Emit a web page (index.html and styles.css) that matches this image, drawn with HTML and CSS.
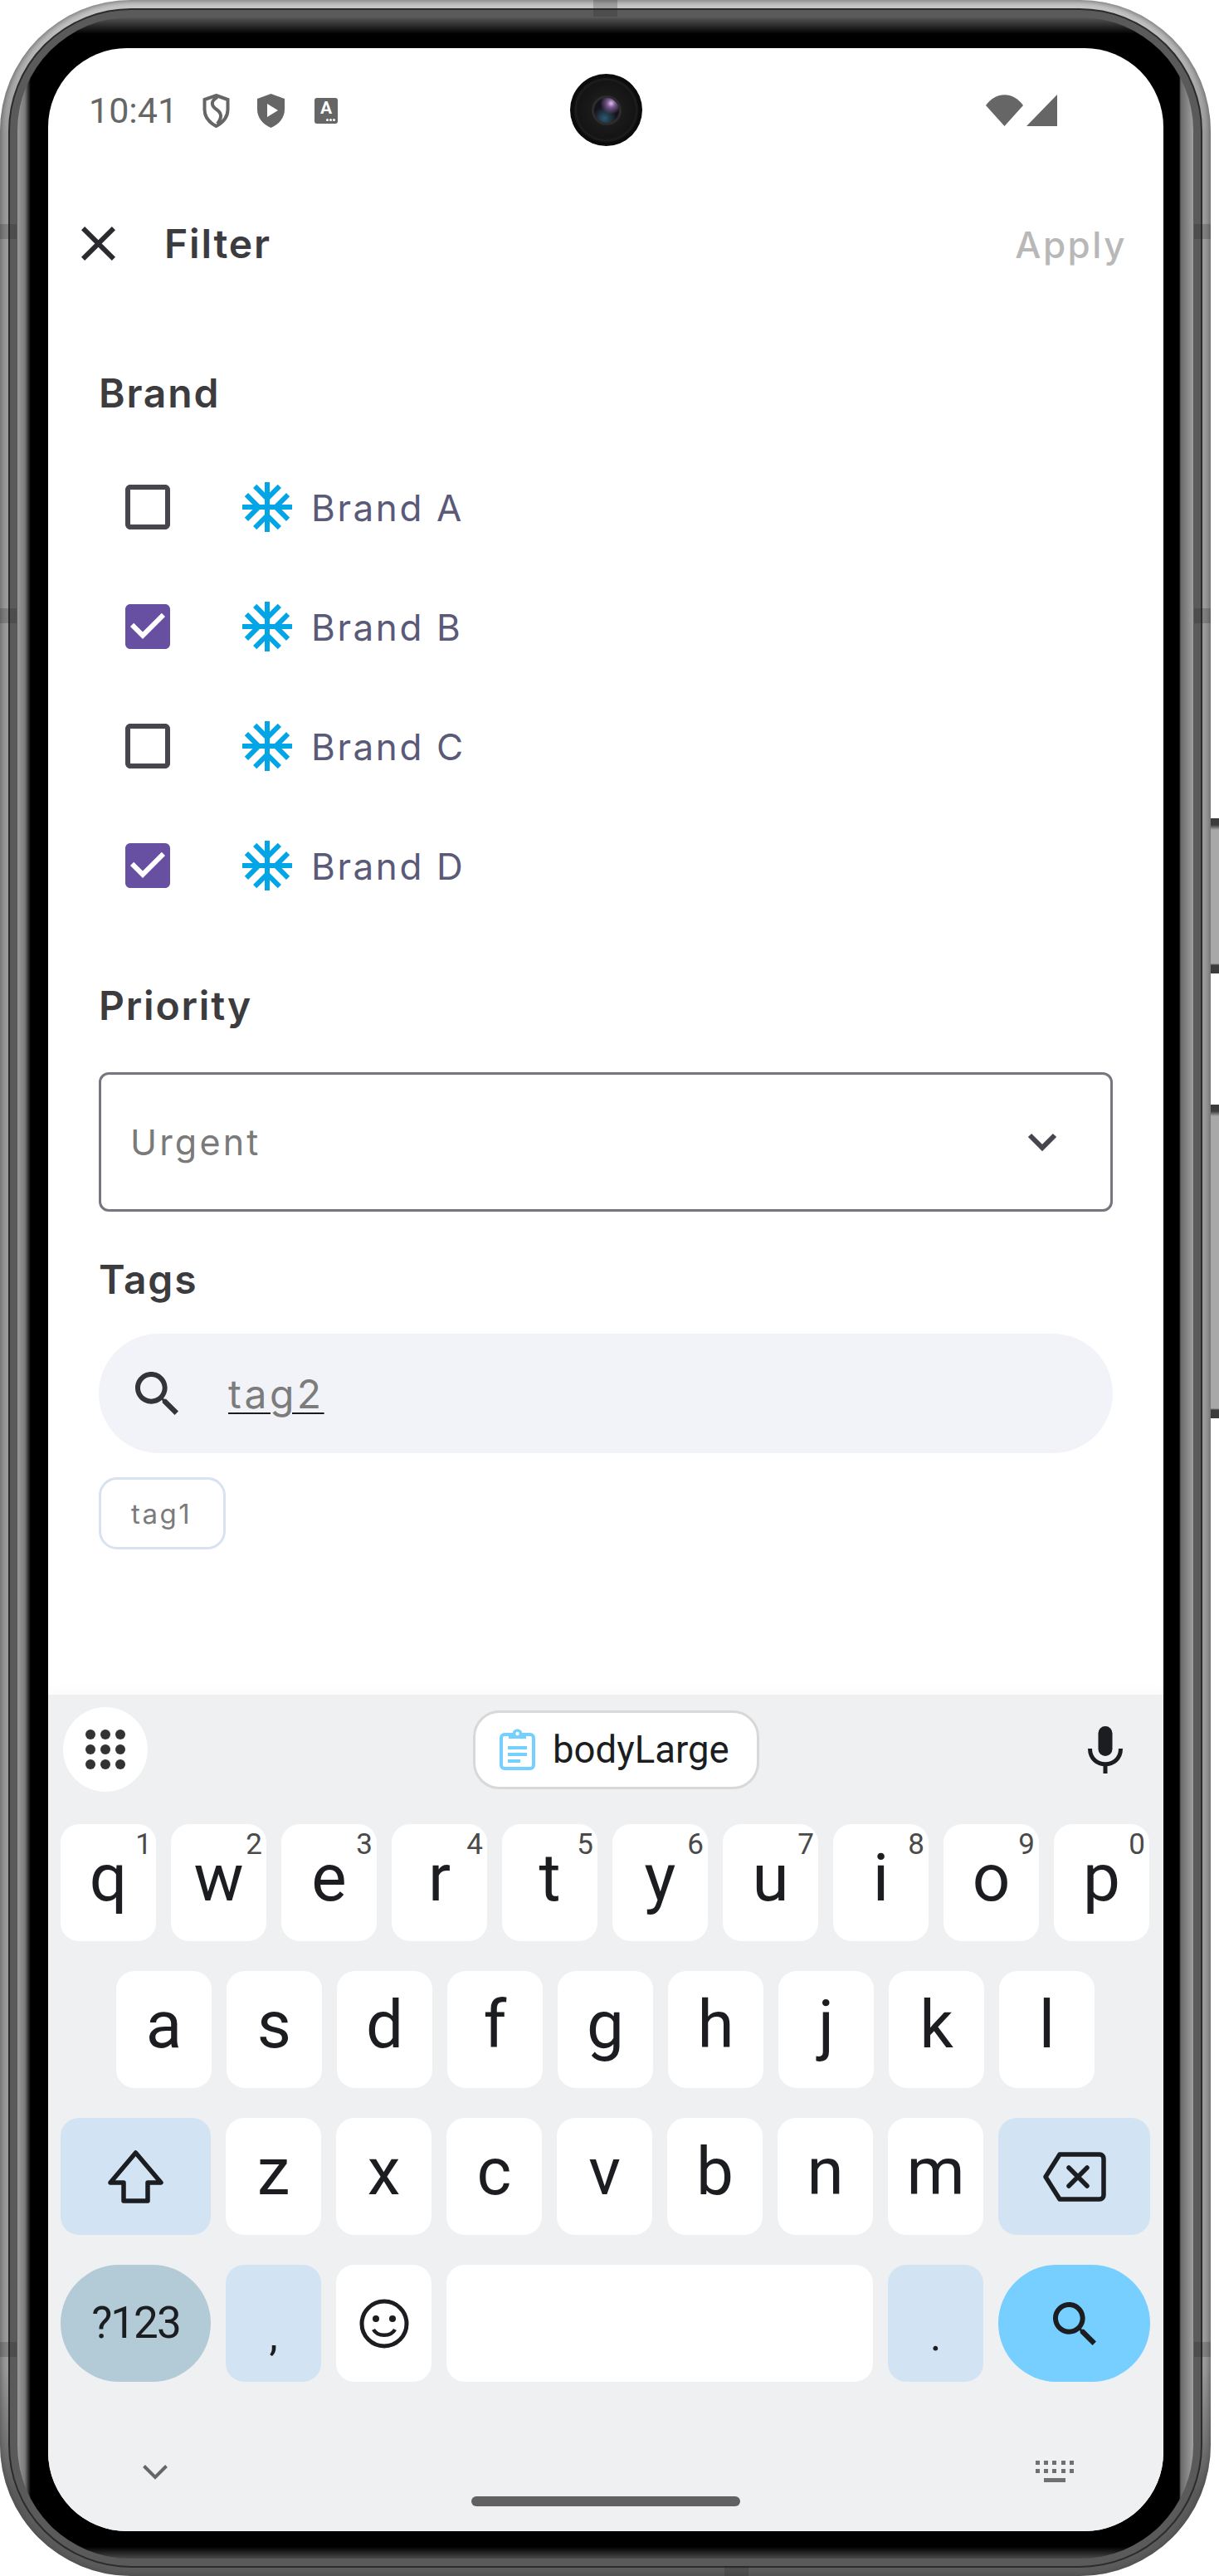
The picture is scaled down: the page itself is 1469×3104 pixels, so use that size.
FILE: index.html
```html
<!DOCTYPE html>
<html lang="en">
<head>
    <meta charset="UTF-8">
    <meta name="viewport" content="width=device-width, initial-scale=1.0">
    <title>Filter</title>
    <link rel="stylesheet" href="styles.css">
</head>
<body>
    <div class="phone">
        <span class="antenna antenna-top"></span>
        <span class="antenna antenna-bottom"></span>
        <span class="antenna antenna-left1"></span>
        <span class="antenna antenna-left2"></span>
        <span class="antenna antenna-left3"></span>
        <span class="antenna antenna-right1"></span>
        <span class="antenna antenna-right2"></span>
        <span class="antenna antenna-right3"></span>
        <div class="side-btn side-btn-power"></div>
        <div class="side-btn side-btn-volume"></div>
        <div class="band">
            <div class="bezel">
                <div class="screen">
                    <div class="camera"><div class="lens"></div></div>

                    <div class="status-bar">
                        <span class="clock">10:41</span>
                        <svg class="shield shield-first" viewBox="0 0 33 41">
                            <path d="M16.500 2 L30.500 7 V19 C30.500 28 24 35 16.500 39 C9 35 2.500 28 2.500 19 V7 Z" fill="none" stroke="#666" stroke-width="4"/>
                            <path d="M18 4 C9 9 11 15 17 19 C23 23 24 28 18 36" fill="none" stroke="#666" stroke-width="4"/>
                        </svg>
                        <svg class="shield shield-second" viewBox="0 0 33 41">
                            <path fill-rule="evenodd" d="M16.500 0 L33 6 V19 C33 29 26 37 16.500 41 C7 37 0 29 0 19 V6 Z M12 12 V28 L25 20 Z" fill="#666"/>
                        </svg>
                        <span class="a-icon">A<i class="a-dots"></i></span>
                        <svg class="wifi" viewBox="0 0 45 38">
                            <path d="M0 13 C12 -4 33 -4 45 13 L22.500 38 Z" fill="#666"/>
                        </svg>
                        <svg class="signal" viewBox="0 0 37 38">
                            <path d="M37 0 V38 H0 Z" fill="#666"/>
                        </svg>
                    </div>

                    <div class="toolbar">
                        <svg class="close-icon" viewBox="5 5 14 14">
                            <path d="M19 6.410L17.590 5 12 10.590 6.410 5 5 6.410 10.590 12 5 17.590 6.410 19 12 13.410 17.590 19 19 17.590 13.410 12z"/>
                        </svg>
                        <span class="toolbar-title">Filter</span>
                        <span class="toolbar-action">Apply</span>
                    </div>

                    <div class="content">
                        <h2 class="section-title">Brand</h2>
                        <div class="brand-list">
                            <div class="brand-row">
                                <svg class="check" viewBox="3 3 18 18"><path d="M19 5v14H5V5h14m0-2H5c-1.100 0-2 .9-2 2v14c0 1.100.9 2 2 2h14c1.100 0 2-.9 2-2V5c0-1.100-.9-2-2-2z"/></svg>
                                <svg class="snow" viewBox="2 2 20 20"><path d="M22 11h-4.170l3.240-3.240-1.410-1.420L15 11h-2V9l4.660-4.660-1.420-1.410L13 6.170V2h-2v4.170L7.760 2.930 6.340 4.340 11 9v2H9L4.340 6.340 2.930 7.760 6.170 11H2v2h4.170l-3.240 3.240 1.410 1.420L9 13h2v2l-4.660 4.660 1.420 1.410L11 17.830V22h2v-4.170l3.240 3.240 1.420-1.410L13 15v-2h2l4.660 4.660 1.410-1.420L17.830 13H22z"/></svg>
                                <span class="brand-name">Brand A</span>
                            </div>
                            <div class="brand-row">
                                <svg class="check check-on" viewBox="3 3 18 18"><path d="M19 3H5c-1.110 0-2 .9-2 2v14c0 1.100.89 2 2 2h14c1.110 0 2-.9 2-2V5c0-1.100-.89-2-2-2zm-9 14l-5-5 1.410-1.410L10 14.170l7.590-7.590L19 8l-9 9z"/></svg>
                                <svg class="snow" viewBox="2 2 20 20"><path d="M22 11h-4.170l3.240-3.240-1.410-1.420L15 11h-2V9l4.660-4.660-1.420-1.410L13 6.170V2h-2v4.170L7.760 2.930 6.340 4.340 11 9v2H9L4.340 6.340 2.930 7.760 6.170 11H2v2h4.170l-3.240 3.240 1.410 1.420L9 13h2v2l-4.660 4.660 1.420 1.410L11 17.830V22h2v-4.170l3.240 3.240 1.420-1.410L13 15v-2h2l4.660 4.660 1.410-1.420L17.830 13H22z"/></svg>
                                <span class="brand-name">Brand B</span>
                            </div>
                            <div class="brand-row">
                                <svg class="check" viewBox="3 3 18 18"><path d="M19 5v14H5V5h14m0-2H5c-1.100 0-2 .9-2 2v14c0 1.100.9 2 2 2h14c1.100 0 2-.9 2-2V5c0-1.100-.9-2-2-2z"/></svg>
                                <svg class="snow" viewBox="2 2 20 20"><path d="M22 11h-4.170l3.240-3.240-1.410-1.420L15 11h-2V9l4.660-4.660-1.420-1.410L13 6.170V2h-2v4.170L7.760 2.930 6.340 4.340 11 9v2H9L4.340 6.340 2.930 7.760 6.170 11H2v2h4.170l-3.240 3.240 1.410 1.420L9 13h2v2l-4.660 4.660 1.420 1.410L11 17.830V22h2v-4.170l3.240 3.240 1.420-1.410L13 15v-2h2l4.660 4.660 1.410-1.420L17.830 13H22z"/></svg>
                                <span class="brand-name">Brand C</span>
                            </div>
                            <div class="brand-row">
                                <svg class="check check-on" viewBox="3 3 18 18"><path d="M19 3H5c-1.110 0-2 .9-2 2v14c0 1.100.89 2 2 2h14c1.110 0 2-.9 2-2V5c0-1.100-.89-2-2-2zm-9 14l-5-5 1.410-1.410L10 14.170l7.590-7.590L19 8l-9 9z"/></svg>
                                <svg class="snow" viewBox="2 2 20 20"><path d="M22 11h-4.170l3.240-3.240-1.410-1.420L15 11h-2V9l4.660-4.660-1.420-1.410L13 6.170V2h-2v4.170L7.760 2.930 6.340 4.340 11 9v2H9L4.340 6.340 2.930 7.760 6.170 11H2v2h4.170l-3.240 3.240 1.410 1.420L9 13h2v2l-4.660 4.660 1.420 1.410L11 17.830V22h2v-4.170l3.240 3.240 1.420-1.410L13 15v-2h2l4.660 4.660 1.410-1.420L17.830 13H22z"/></svg>
                                <span class="brand-name">Brand D</span>
                            </div>
                        </div>

                        <h2 class="section-title section-priority">Priority</h2>
                        <div class="dropdown">
                            <span class="dropdown-value">Urgent</span>
                            <svg class="dropdown-arrow" viewBox="0 0 36 24">
                                <path d="M3 4 L18 19 L33 4" fill="none" stroke="#49454f" stroke-width="6"/>
                            </svg>
                        </div>

                        <h2 class="section-title section-tags">Tags</h2>
                        <div class="search-pill">
                            <svg class="search-icon" viewBox="3 3 17.490 17.490"><path d="M15.500 14h-.79l-.28-.27C15.410 12.590 16 11.110 16 9.500 16 5.910 13.090 3 9.500 3S3 5.910 3 9.500 5.910 16 9.500 16c1.610 0 3.090-.59 4.230-1.570l.27.28v.79l5 4.990L20.490 19l-4.990-5zm-6 0C7.010 14 5 11.990 5 9.500S7.010 5 9.500 5 14 7.010 14 9.500 11.990 14 9.500 14z"/></svg>
                            <span class="search-text">tag2</span>
                        </div>
                        <div class="chip">tag1</div>
                    </div>

                    <div class="keyboard">
                        <div class="kb-top">
                            <div class="apps-btn">
                                <i></i><i></i><i></i><i></i><i></i><i></i><i></i><i></i><i></i>
                            </div>
                            <div class="clip-chip">
                                <svg class="clip-icon" viewBox="0 0 43 50">
                                    <rect x="2" y="7" width="39" height="41" rx="4" fill="none" stroke="#76d0ff" stroke-width="4"/>
                                    <path d="M11 5 H16 C16 -1 27 -1 27 5 H32 V12 H11 Z" fill="#76d0ff"/>
                                    <circle cx="21.500" cy="6" r="2.200" fill="#fff"/>
                                    <rect x="10" y="21" width="23" height="4" fill="#76d0ff"/>
                                    <rect x="10" y="29" width="23" height="4" fill="#76d0ff"/>
                                    <rect x="10" y="37" width="15" height="4" fill="#76d0ff"/>
                                </svg>
                                <span>bodyLarge</span>
                            </div>
                            <svg class="mic" viewBox="0 0 42 57">
                                <rect x="12.500" y="0" width="17" height="36" rx="8.500" fill="#1b1d20"/>
                                <path d="M2.500 27 C2.500 52 39.500 52 39.500 27" fill="none" stroke="#1b1d20" stroke-width="5"/>
                                <rect x="18.500" y="44" width="5" height="13" fill="#1b1d20"/>
                            </svg>
                        </div>

                        <div class="kb-rows">
                            <div class="kb-row">
                                <div class="key">q<sup>1</sup></div>
                                <div class="key">w<sup>2</sup></div>
                                <div class="key">e<sup>3</sup></div>
                                <div class="key">r<sup>4</sup></div>
                                <div class="key">t<sup>5</sup></div>
                                <div class="key">y<sup>6</sup></div>
                                <div class="key">u<sup>7</sup></div>
                                <div class="key">i<sup>8</sup></div>
                                <div class="key">o<sup>9</sup></div>
                                <div class="key">p<sup>0</sup></div>
                            </div>
                            <div class="kb-row kb-row-home">
                                <div class="key">a</div>
                                <div class="key">s</div>
                                <div class="key">d</div>
                                <div class="key">f</div>
                                <div class="key">g</div>
                                <div class="key">h</div>
                                <div class="key">j</div>
                                <div class="key">k</div>
                                <div class="key">l</div>
                            </div>
                            <div class="kb-row">
                                <div class="key key-fn key-wide">
                                    <svg class="shift-icon" viewBox="0 0 67 64">
                                        <path d="M33.500 3 L64 39 H48 V61 H19 V39 H3 Z" fill="none" stroke="#1b1d20" stroke-width="5.500" stroke-linejoin="round"/>
                                    </svg>
                                </div>
                                <div class="key">z</div>
                                <div class="key">x</div>
                                <div class="key">c</div>
                                <div class="key">v</div>
                                <div class="key">b</div>
                                <div class="key">n</div>
                                <div class="key">m</div>
                                <div class="key key-fn key-wider">
                                    <svg class="back-icon" viewBox="0 0 76 60">
                                        <path d="M20 3 H68 C71 3 73 5 73 8 V52 C73 55 71 57 68 57 H20 L3 30 Z" fill="none" stroke="#1b1d20" stroke-width="5.500" stroke-linejoin="round"/>
                                        <path d="M31 19 L53 41 M53 19 L31 41" fill="none" stroke="#1b1d20" stroke-width="5.500" stroke-linecap="round"/>
                                    </svg>
                                </div>
                            </div>
                            <div class="kb-row">
                                <div class="key key-pill key-wide key-symbols">?123</div>
                                <div class="key key-fn key-punct">,</div>
                                <div class="key">
                                    <svg class="emoji-icon" viewBox="0 0 60 60">
                                        <circle cx="30" cy="30" r="27" fill="none" stroke="#1b1d20" stroke-width="5"/>
                                        <circle cx="20" cy="24" r="4" fill="#1b1d20"/>
                                        <circle cx="40" cy="24" r="4" fill="#1b1d20"/>
                                        <path d="M17 37 C22 46 38 46 43 37" fill="none" stroke="#1b1d20" stroke-width="4.500"/>
                                    </svg>
                                </div>
                                <div class="key key-space"></div>
                                <div class="key key-fn key-punct">.</div>
                                <div class="key key-pill key-wider key-go">
                                    <svg class="go-icon" viewBox="3 3 17.490 17.490"><path d="M15.500 14h-.79l-.28-.27C15.410 12.590 16 11.110 16 9.500 16 5.910 13.090 3 9.500 3S3 5.910 3 9.500 5.910 16 9.500 16c1.610 0 3.090-.59 4.230-1.570l.27.28v.79l5 4.990L20.490 19l-4.990-5zm-6 0C7.010 14 5 11.990 5 9.500S7.010 5 9.500 5 14 7.010 14 9.500 11.990 14 9.500 14z"/></svg>
                                </div>
                            </div>
                        </div>

                        <div class="kb-nav">
                            <svg class="nav-chevron" viewBox="0 0 30 18">
                                <path d="M1.500 1.500 L15 15 L28.500 1.500" fill="none" stroke="#666" stroke-width="4"/>
                            </svg>
                            <svg class="nav-keyboard" viewBox="0 0 46 26">
                                <g fill="#707070">
                                    <rect x="0" y="0" width="5" height="5"/><rect x="10" y="0" width="5" height="5"/><rect x="20" y="0" width="5" height="5"/><rect x="31" y="0" width="5" height="5"/><rect x="41" y="0" width="5" height="5"/>
                                    <rect x="0" y="10" width="5" height="5"/><rect x="10" y="10" width="5" height="5"/><rect x="20" y="10" width="5" height="5"/><rect x="31" y="10" width="5" height="5"/><rect x="41" y="10" width="5" height="5"/>
                                    <rect x="10" y="21" width="26" height="5"/>
                                </g>
                            </svg>
                        </div>
                        <div class="home-bar"></div>
                    </div>
                </div>
            </div>
        </div>
    </div>
</body>
</html>
```

FILE: styles.css
```css
* {
    box-sizing: border-box;
}

html, body {
    margin: 0;
    padding: 0;
    background-color: #ffffff;
}

body {
    width: 1469px;
    height: 3104px;
    overflow: hidden;
    font-family: 'Inter', sans-serif;
}

/* phone frame */
.phone {
    position: relative;
    width: 1459px;
    height: 3104px;
    padding: 10px;
    border-radius: 158px;
    background: linear-gradient(to bottom, #c9c9c9 0, #9c9c9c 160px, #9c9c9c 2850px, #5c5c5c 3000px);
    box-shadow: inset 0 0 7px 1px rgba(70, 70, 70, 0.75);
}

.band {
    height: 100%;
    padding: 9px;
    border-radius: 148px;
    border: 2px solid #2c2c2c;
    background-color: #5a5a5a;
}

.bezel {
    height: 100%;
    padding: 37px 36px 33px 37px;
    border-radius: 136px;
    background:
        linear-gradient(to bottom, #555 0, rgba(0, 0, 0, 0) 20px),
        linear-gradient(to top, #4a4a4a 0, rgba(0, 0, 0, 0) 14px),
        linear-gradient(to right, #9a9a9a 0, #7a7a7a 9px, #000 16px, #000 calc(100% - 17px), #6a6a6a calc(100% - 15px), #a0a0a0 100%);
}

.antenna {
    position: absolute;
    background-color: rgba(30, 30, 30, 0.22);
}

.antenna-top { left: 715px; top: 0; width: 29px; height: 20px; }
.antenna-bottom { left: 873px; bottom: 0; width: 29px; height: 12px; }
.antenna-left1 { left: 0; top: 270px; width: 20px; height: 18px; }
.antenna-left2 { left: 0; top: 733px; width: 20px; height: 18px; }
.antenna-left3 { left: 0; top: 2822px; width: 20px; height: 18px; }
.antenna-right1 { right: 0; top: 270px; width: 20px; height: 18px; }
.antenna-right2 { right: 0; top: 733px; width: 20px; height: 18px; }
.antenna-right3 { right: 0; top: 2822px; width: 20px; height: 18px; }

.side-btn {
    position: absolute;
    left: 1459px;
    width: 10px;
    background: linear-gradient(to bottom, #3c3c3c 0, #3c3c3c 8px, #a8a8a8 14px, #a8a8a8 calc(100% - 12px), #3c3c3c calc(100% - 10px));
}

.side-btn-power { top: 986px; height: 187px; }
.side-btn-volume { top: 1331px; height: 378px; }

.screen {
    position: relative;
    display: flex;
    flex-direction: column;
    height: 100%;
    border-radius: 95px;
    overflow: hidden;
    background-color: #ffffff;
}

.camera {
    position: absolute;
    left: 629px;
    top: 31px;
    display: flex;
    align-items: center;
    justify-content: center;
    width: 87px;
    height: 87px;
    border-radius: 50%;
    background: radial-gradient(circle, #222 0, #141414 56%, #1e1e1e 60%, #0c0c0c 64%, #050505 100%);
}

.lens {
    width: 30px;
    height: 30px;
    border-radius: 50%;
    background:
        radial-gradient(circle at 68% 22%, #e0c0ec 0, #7a5a90 16%, rgba(0, 0, 0, 0) 42%),
        radial-gradient(circle at 42% 82%, #2d5a6e 0, rgba(0, 0, 0, 0) 48%),
        #15121c;
    box-shadow: 0 0 0 3px #2c2c2c;
}

/* status bar */
.status-bar {
    display: flex;
    align-items: center;
    height: 150px;
    padding-left: 49px;
    color: #666666;
}

.clock {
    width: 98px;
    font-family: 'Roboto', sans-serif;
    font-size: 43px;
    line-height: 42px;
    white-space: nowrap;
}

.shield {
    width: 33px;
    height: 41px;
}

.shield-first {
    margin-left: 39px;
}

.shield-second {
    margin-left: 33px;
}

.a-icon {
    position: relative;
    display: block;
    width: 28px;
    height: 31px;
    margin-left: 36px;
    padding-top: 2px;
    border-radius: 3px;
    background-color: #666666;
    color: #ffffff;
    font-family: 'Roboto', sans-serif;
    font-size: 21px;
    font-weight: 700;
    line-height: 21px;
    text-align: center;
}

.a-dots {
    position: absolute;
    left: 14px;
    top: 25px;
    width: 3px;
    height: 3px;
    border-radius: 50%;
    background-color: #ffffff;
    box-shadow: 4px 0 0 #ffffff, 8px 0 0 #ffffff;
}

.wifi {
    width: 45px;
    height: 38px;
    margin-left: auto;
}

.signal {
    width: 37px;
    height: 38px;
    margin-left: 4px;
    margin-right: 128px;
}

/* toolbar */
.toolbar {
    display: flex;
    align-items: center;
    height: 170px;
    padding: 0 44px 0 40px;
}

.close-icon {
    width: 41px;
    height: 41px;
    fill: #2b2b2f;
}

.toolbar-title {
    margin-left: 59px;
    color: #3c3c3f;
    font-size: 48px;
    font-weight: 600;
    letter-spacing: 1.800px;
}

.toolbar-action {
    margin-left: auto;
    margin-top: 3px;
    color: #b8b8b8;
    font-size: 44px;
    font-weight: 500;
    letter-spacing: 2.500px;
}

/* filter form */
.content {
    display: flex;
    flex-direction: column;
    padding: 66px 61px 0;
}

.section-title {
    margin: 0;
    color: #3c3c3f;
    font-size: 48px;
    font-weight: 600;
    line-height: 60px;
    letter-spacing: 1.800px;
}

.brand-list {
    margin-top: 35px;
}

.brand-row {
    display: flex;
    align-items: center;
    height: 144px;
    padding-left: 32px;
}

.check {
    width: 54px;
    height: 54px;
    fill: #49454f;
}

.check-on {
    fill: #674fa2;
}

.snow {
    width: 60px;
    height: 60px;
    margin-left: 87px;
    fill: #03a5e6;
}

.brand-name {
    margin-left: 23px;
    padding-top: 2px;
    color: #5a5a78;
    font-size: 44px;
    letter-spacing: 2.600px;
}

.section-priority {
    margin-top: 67px;
}

.dropdown {
    display: flex;
    align-items: center;
    justify-content: space-between;
    height: 168px;
    margin-top: 50px;
    padding: 0 64px 0 35px;
    border: 3px solid #79747e;
    border-radius: 12px;
}

.dropdown-value {
    color: #7a7a7a;
    font-size: 43px;
    letter-spacing: 3.200px;
}

.dropdown-arrow {
    width: 36px;
    height: 24px;
}

.section-tags {
    margin-top: 52px;
}

.search-pill {
    display: flex;
    align-items: center;
    height: 144px;
    margin-top: 35px;
    padding-left: 44px;
    border-radius: 72px;
    background-color: #f2f3f8;
}

.search-icon {
    width: 52px;
    height: 52px;
    fill: #333438;
}

.search-text {
    margin-left: 60px;
    color: #7c7c7c;
    font-size: 48px;
    letter-spacing: 3.500px;
    text-decoration: underline;
    text-decoration-color: #1b1b1f;
    text-decoration-thickness: 2px;
    text-underline-offset: 5px;
}

.chip {
    align-self: flex-start;
    display: flex;
    align-items: center;
    height: 87px;
    margin-top: 29px;
    padding: 0 38px 0 36px;
    border: 3px solid #d9e2f0;
    border-radius: 22px;
    color: #7b7b7b;
    font-size: 33px;
    letter-spacing: 2.500px;
}

/* keyboard */
.keyboard {
    margin-top: auto;
    height: 1008px;
    padding: 15px 16px 0 15px;
    background-color: #eff0f2;
    box-shadow: 0 -8px 10px rgba(0, 0, 0, 0.015);
    font-family: 'Roboto', sans-serif;
    color: #1b1d20;
}

.kb-top {
    display: flex;
    align-items: center;
    height: 102px;
}

.apps-btn {
    display: grid;
    grid-template-columns: repeat(3, 12px);
    gap: 6px;
    align-content: center;
    justify-content: center;
    width: 102px;
    height: 102px;
    margin-left: 3px;
    border-radius: 50%;
    background-color: #ffffff;
}

.apps-btn i {
    width: 12px;
    height: 12px;
    border-radius: 50%;
    background-color: #333333;
}

.clip-chip {
    display: flex;
    align-items: center;
    gap: 21px;
    width: 345px;
    height: 95px;
    margin-left: 392px;
    padding-left: 29px;
    border: 3px solid #d8d8d8;
    border-radius: 32px;
    background-color: #ffffff;
    font-size: 45.500px;
    white-space: nowrap;
}

.clip-icon {
    width: 43px;
    height: 50px;
}

.mic {
    width: 42px;
    height: 57px;
    margin-left: auto;
    margin-right: 33px;
}

.kb-rows {
    display: flex;
    flex-direction: column;
    gap: 36px;
    margin-top: 39px;
}

.kb-row {
    display: flex;
    gap: 18px;
    height: 141px;
}

.kb-row-home {
    padding-left: 67px;
}

.key {
    position: relative;
    display: flex;
    align-items: center;
    justify-content: center;
    flex: 0 0 115px;
    padding-bottom: 12px;
    border-radius: 22px;
    background-color: #ffffff;
    font-size: 80px;
    line-height: 1;
}

.key sup {
    position: absolute;
    right: 5px;
    top: 5px;
    color: #4a4a4a;
    font-size: 35px;
    line-height: 40px;
}

.key-fn {
    background-color: #d2e4f3;
}

.key-wide {
    flex-basis: 181px;
    padding-bottom: 0;
}

.key-wider {
    flex-basis: 183px;
    padding-bottom: 0;
}

.key-space {
    flex: 1 1 auto;
}

.key-pill {
    border-radius: 71px;
}

.key-symbols {
    background-color: #b3cad7;
    font-size: 53px;
    letter-spacing: -2px;
}

.key-go {
    background-color: #76cfff;
}

.key-punct {
    align-items: flex-end;
    padding-bottom: 29px;
    font-size: 52px;
}

.shift-icon {
    width: 67px;
    height: 64px;
}

.back-icon {
    width: 76px;
    height: 60px;
}

.emoji-icon {
    width: 60px;
    height: 60px;
    margin-top: 12px;
}

.go-icon {
    width: 52px;
    height: 52px;
    fill: #1b1d20;
}

.kb-nav {
    display: flex;
    justify-content: space-between;
    margin-top: 95px;
    padding: 0 92px 0 99px;
}

.nav-chevron {
    width: 30px;
    height: 18px;
    margin-top: 5px;
}

.nav-keyboard {
    width: 46px;
    height: 26px;
}

.home-bar {
    width: 324px;
    height: 12px;
    margin: 17px auto 0;
    border-radius: 6px;
    background-color: #616161;
}
```
